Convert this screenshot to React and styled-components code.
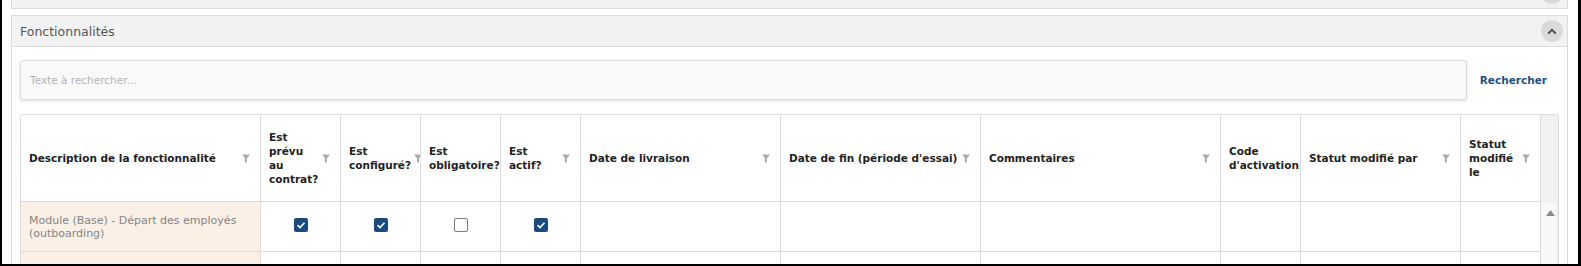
import React from 'react';
import styled, { createGlobalStyle } from 'styled-components';

const GlobalStyle = createGlobalStyle`
  body {
    margin: 0;
    font-family: "DejaVu Sans", "Liberation Sans", sans-serif;
    background: #fff;
  }
`;

const COLS = '240px 80px 80px 80px 80px 200px 200px 240px 80px 160px 80px';

const columns = [
  'Description de la fonctionnalité',
  'Est prévu au contrat?',
  'Est configuré?',
  'Est obligatoire?',
  'Est actif?',
  'Date de livraison',
  'Date de fin (période d\'essai)',
  'Commentaires',
  'Code d\'activation',
  'Statut modifié par',
  'Statut modifié le',
];

const rows = [
  { label: 'Module (Base) - Départ des employés (outboarding)', checks: [true, true, false, true] },
  { label: '', checks: null },
];

function App() {
  return (
    <>
      <GlobalStyle />
      <Frame>
        <CollapsedPanel>
          <PanelHeader>
            <PanelTitle />
            <CollapseButton>
              <Chevron />
            </CollapseButton>
          </PanelHeader>
        </CollapsedPanel>

        <Panel>
          <PanelHeader>
            <PanelTitle>Fonctionnalités</PanelTitle>
            <CollapseButton>
              <Chevron />
            </CollapseButton>
          </PanelHeader>
          <PanelBody>
            <SearchRow>
              <SearchInput placeholder="Texte à rechercher..." />
              <SearchLink>Rechercher</SearchLink>
            </SearchRow>

            <Table>
              <HeadRow>
                <HeadGrid>
                  {columns.map((c) => (
                    <HeadCell key={c}>
                      <HeadLabel>{c}</HeadLabel>
                      <FilterIcon />
                    </HeadCell>
                  ))}
                </HeadGrid>
                <HeadFiller />
              </HeadRow>
              <BodyWrap>
                <Rows>
                  {rows.map((r, i) => (
                    <BodyGrid key={i}>
                      <DescCell>{r.label}</DescCell>
                      {[0, 1, 2, 3].map((k) => (
                        <CheckCell key={k}>
                          {r.checks && <Checkbox checked={r.checks[k]} />}
                        </CheckCell>
                      ))}
                      {Array.from({ length: 6 }).map((_, k) => (
                        <Cell key={k} />
                      ))}
                    </BodyGrid>
                  ))}
                </Rows>
                <ScrollTrack>
                  <svg width="9" height="6" viewBox="0 0 9 6">
                    <polygon points="0,6 4.5,0 9,6" fill="#8a8a8a" />
                  </svg>
                </ScrollTrack>
              </BodyWrap>
            </Table>
          </PanelBody>
        </Panel>
      </Frame>
    </>
  );
}

export default App;

function Chevron() {
  return (
    <svg width="10" height="7" viewBox="0 0 10 7">
      <path d="M1.2 5.6 L5 1.8 L8.8 5.6" fill="none" stroke="#4f4f4f" strokeWidth="2" />
    </svg>
  );
}

function FilterIcon() {
  return (
    <FilterWrap>
      <svg width="8" height="9" viewBox="0 0 8 9">
        <path d="M0 0.5 H8 L5 4.2 V8.5 H3 V4.2 Z" fill="#ababab" />
      </svg>
    </FilterWrap>
  );
}

function Checkbox({ checked }) {
  return (
    <Box checked={checked}>
      {checked && (
        <svg width="14" height="14" viewBox="0 0 14 14">
          <polyline points="3.6,7.2 6,9.5 10.5,4.7" fill="none" stroke="#fff" strokeWidth="1.6" />
        </svg>
      )}
    </Box>
  );
}

const Frame = styled.div`
  width: 1581px;
  height: 266px;
  box-sizing: border-box;
  border-left: 2px solid #000;
  border-right: 3px solid #000;
  border-bottom: 2px solid #000;
  padding: 0 10px 0 9px;
  overflow: hidden;
`;

const CollapsedPanel = styled.div`
  margin-top: -23px;
`;

const Panel = styled.div`
  margin-top: 6px;
  border-left: 1px solid #dcdcdc;
  border-right: 1px solid #dcdcdc;
  background: #fff;
`;

const PanelHeader = styled.div`
  display: flex;
  align-items: center;
  height: 32px;
  box-sizing: border-box;
  padding: 0 4px 0 8px;
  background: #f2f2f2;
  border: 1px solid #dcdcdc;
  ${Panel} & {
    margin: 0 -1px;
  }
`;

const PanelTitle = styled.div`
  flex: 1;
  font-size: 12.5px;
  color: #555;
`;

const CollapseButton = styled.div`
  width: 22px;
  height: 22px;
  border-radius: 50%;
  background: #dadada;
  display: flex;
  align-items: center;
  justify-content: center;
`;

const PanelBody = styled.div`
  padding: 13px 8px 0 8px;
`;

const SearchRow = styled.div`
  display: flex;
  align-items: center;
`;

const SearchInput = styled.input`
  flex: 1;
  height: 40px;
  box-sizing: border-box;
  border: 1px solid #dcdcdc;
  border-radius: 3px;
  background: #f9f9f9;
  box-shadow: 0 1px 3px rgba(0, 0, 0, 0.14);
  padding: 0 9px;
  font-family: inherit;
  font-size: 10.5px;
  outline: none;
  &::placeholder {
    color: #b4b4b4;
  }
`;

const SearchLink = styled.a`
  padding: 0 12px 0 13px;
  font-size: 10.5px;
  font-weight: bold;
  color: #1f4f87;
  cursor: pointer;
`;

const Table = styled.div`
  margin-top: 14px;
  border: 1px solid #dcdcdc;
  border-bottom: none;
  border-radius: 4px 4px 0 0;
  overflow: hidden;
`;

const HeadRow = styled.div`
  display: flex;
`;

const HeadGrid = styled.div`
  display: grid;
  grid-template-columns: ${COLS};
`;

const HeadCell = styled.div`
  display: flex;
  align-items: center;
  height: 87px;
  box-sizing: border-box;
  padding: 0 10px 0 8px;
  border-right: 1px solid #dcdcdc;
  border-bottom: 1px solid #dcdcdc;
  overflow: hidden;
  background: #fff;
`;

const HeadLabel = styled.div`
  flex: 0 1 auto;
  font-size: 10.5px;
  font-weight: bold;
  line-height: 14px;
  color: #222;
`;

const FilterWrap = styled.div`
  flex: 0 0 auto;
  margin-left: auto;
  padding-left: 3px;
  display: flex;
  align-items: center;
`;

const HeadFiller = styled.div`
  flex: 1;
  background: #f1f1f1;
`;

const BodyWrap = styled.div`
  display: flex;
`;

const Rows = styled.div`
  display: flex;
  flex-direction: column;
`;

const BodyGrid = styled.div`
  display: grid;
  grid-template-columns: ${COLS};
`;

const Cell = styled.div`
  height: 50px;
  box-sizing: border-box;
  border-right: 1px solid #dcdcdc;
  border-bottom: 1px solid #dcdcdc;
`;

const DescCell = styled(Cell)`
  display: flex;
  align-items: center;
  padding: 0 8px;
  background: #fbf0e5;
  font-size: 11px;
  line-height: 13px;
  color: #858585;
`;

const CheckCell = styled(Cell)`
  display: flex;
  align-items: center;
  justify-content: center;
  padding-bottom: 3px;
`;

const Box = styled.div`
  width: 14px;
  height: 14px;
  box-sizing: border-box;
  border-radius: 2px;
  background: ${(p) => (p.checked ? '#1b4a7f' : '#fff')};
  border: ${(p) => (p.checked ? 'none' : '1.5px solid #7a7a7a')};
  display: flex;
`;

const ScrollTrack = styled.div`
  flex: 1;
  background: #f8f8f8;
  display: flex;
  justify-content: center;
  padding-top: 8px;
  padding-left: 1px;
  box-shadow: inset -2px 0 2px rgba(0, 0, 0, 0.04);
`;
